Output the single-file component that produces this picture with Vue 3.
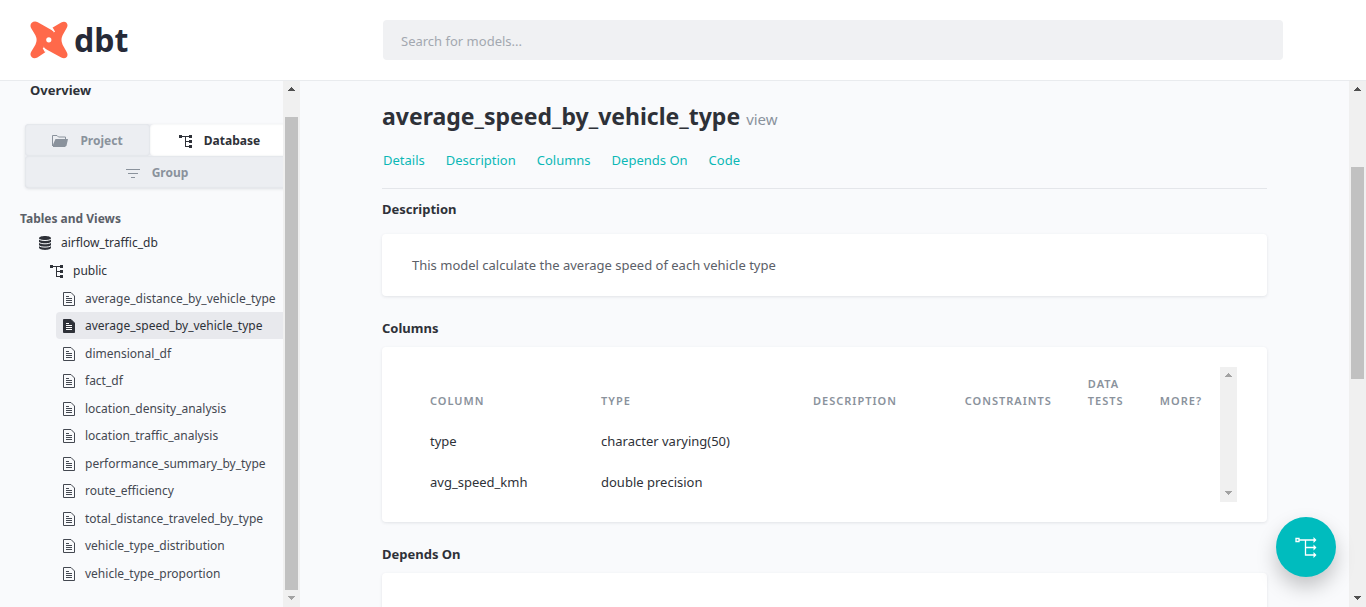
<script setup>
import { ref, h } from 'vue'

const query = ref('')

const links = ['Details', 'Description', 'Columns', 'Depends On', 'Code']

const models = [
  'average_distance_by_vehicle_type',
  'average_speed_by_vehicle_type',
  'dimensional_df',
  'fact_df',
  'location_density_analysis',
  'location_traffic_analysis',
  'performance_summary_by_type',
  'route_efficiency',
  'total_distance_traveled_by_type',
  'vehicle_type_distribution',
  'vehicle_type_proportion',
]
const active = ref('average_speed_by_vehicle_type')

const headings = ['Column', 'Type', 'Description', 'Constraints', 'Data Tests', 'More?']
const columns = [
  { name: 'type', type: 'character varying(50)' },
  { name: 'avg_speed_kmh', type: 'double precision' },
]

const TreeIcon = () =>
  h('svg', { width: 13, height: 13, viewBox: '0 0 13 13', fill: 'currentColor', 'shape-rendering': 'crispEdges', 'aria-hidden': 'true' }, [
    h('path', { d: 'M0 0h3v1h7V0h3v3h-3V2H7v4h3V5h3v3h-3V7H7v4h3v-1h3v3h-3v-1H6V2H3v1H0z' }),
  ])

const ArrowUp = () =>
  h('svg', { width: 7, height: 4, viewBox: '0 0 7 4', fill: 'currentColor', 'shape-rendering': 'crispEdges', 'aria-hidden': 'true' }, [
    h('path', { d: 'M3 0h1v1h1v1h1v1h1v1H0V3h1V2h1V1h1z' }),
  ])

const ArrowDown = () =>
  h('svg', { width: 7, height: 4, viewBox: '0 0 7 4', fill: 'currentColor', 'shape-rendering': 'crispEdges', 'aria-hidden': 'true' }, [
    h('path', { d: 'M0 0h7v1H6v1H5v1H4v1H3V3H2V2H1V1H0z' }),
  ])
</script>

<template>
  <div class="app">
    <header class="topbar">
      <a class="logo" href="#" aria-label="dbt">
        <svg width="38" height="38" viewBox="0 0 38 38" aria-hidden="true">
          <path
            fill="#ff694a"
            d="M7.8 1.200 21.500 8.900Q24 10.400 24 12.200 24 8.800 21.900 7L31.200 1.500C35.600-1.100 39.500 3 36.400 7.400L32.600 14.200Q30.400 19 32.600 23.800L36.400 30.600C39.500 35 35.600 39.100 31.200 36.500L17 28.800Q14.200 27.400 13.600 25.400 13.200 29.200 16 30.800L7.400 36.500C3 39.100-1.300 35 1.200 30.800L5.400 23.800Q7.800 19 5.400 14.200L1.200 7.200C-1.300 3 3-1.100 7.800 1.200Z"
          />
          <path d="M22 6.500 24.500 11M13.200 27 15.800 31.500" stroke="#fff" stroke-width="1.200" />
          <circle cx="18.800" cy="18.800" r="2.600" fill="#fff" />
        </svg>
        <span>dbt</span>
      </a>
      <div class="search">
        <input v-model="query" type="search" aria-label="Search for models" placeholder="Search for models..." />
      </div>
    </header>

    <div class="body">
      <aside class="sidebar">
        <div class="side-content">
          <a class="overview" href="#">Overview</a>

          <div class="switcher">
            <button type="button">
              <svg width="16" height="12" viewBox="0 0 16 12" aria-hidden="true">
                <path d="M.5 11V.5h4.500l1.500 1.500h7V4.500" fill="none" stroke="currentColor" />
                <path d="M3.500 4H16l-1.500 6.500L13 12H1V9.500z" fill="currentColor" />
              </svg>
              Project
            </button>
            <button type="button" class="selected"><TreeIcon />Database</button>
            <button type="button" class="wide">
              <svg width="14" height="9" viewBox="0 0 14 9" stroke="currentColor" aria-hidden="true">
                <path d="M0 .5h14M2 4.500h10M5 8.500h4" />
              </svg>
              Group
            </button>
          </div>

          <h2 class="side-title">Tables and Views</h2>
          <nav class="tree">
            <a class="node database" href="#">
              <svg width="12" height="14" viewBox="0 0 12 14" aria-hidden="true">
                <path d="M0 2.500C0-.7 12-.7 12 2.500v9c0 3.200-12 3.200-12 0z" fill="currentColor" />
                <path d="M0 3c1.500 2 10.500 2 12 0M0 6.300c1.500 2 10.500 2 12 0M0 9.600c1.500 2 10.500 2 12 0" fill="none" stroke="#f9fafc" />
              </svg>
              airflow_traffic_db
            </a>
            <a class="node schema" href="#"><TreeIcon />public</a>
            <ul>
              <li v-for="m in models" :key="m">
                <a class="node model" :class="{ active: m === active }" href="#" @click.prevent="active = m">
                  <svg width="12" height="14" viewBox="0 0 12 14" aria-hidden="true">
                    <path
                      d="M.5.5h7.500l3.500 3.500v9.500H.5z"
                      :fill="m === active ? 'currentColor' : 'none'"
                      stroke="currentColor"
                      stroke-linejoin="round"
                    />
                    <path d="M3 4.500h3M3 6.500h6M3 8.500h6M3 10.500h6" :stroke="m === active ? '#fff' : 'currentColor'" />
                  </svg>
                  {{ m }}
                </a>
              </li>
            </ul>
          </nav>
        </div>
        <div class="scrollbar">
          <ArrowUp />
          <div class="track side-track"><div class="thumb"></div></div>
          <ArrowDown class="dim" />
        </div>
      </aside>

      <main class="main">
        <div class="page">
          <h1>average_speed_by_vehicle_type <small>view</small></h1>
          <nav class="links">
            <a v-for="l in links" :key="l" href="#">{{ l }}</a>
          </nav>

          <section>
            <h2>Description</h2>
            <div class="panel">
              <p>This model calculate the average speed of each vehicle type</p>
            </div>
          </section>

          <section>
            <h2>Columns</h2>
            <div class="panel columns-panel">
              <table>
                <colgroup>
                  <col class="c-name" />
                  <col class="c-type" />
                  <col />
                  <col class="c-cons" />
                  <col class="c-test" />
                  <col class="c-more" />
                </colgroup>
                <thead>
                  <tr>
                    <th v-for="t in headings" :key="t" scope="col">{{ t }}</th>
                  </tr>
                </thead>
                <tbody>
                  <tr v-for="c in columns" :key="c.name">
                    <td>{{ c.name }}</td>
                    <td>{{ c.type }}</td>
                    <td></td>
                    <td></td>
                    <td></td>
                    <td></td>
                  </tr>
                </tbody>
              </table>
              <div class="scrollbar idle">
                <ArrowUp />
                <ArrowDown />
              </div>
            </div>
          </section>

          <section>
            <h2>Depends On</h2>
            <div class="panel depends"></div>
          </section>
        </div>
        <div class="scrollbar">
          <ArrowUp />
          <div class="track main-track"><div class="thumb"></div></div>
          <ArrowDown />
        </div>
      </main>
    </div>

    <button class="fab" type="button" aria-label="View lineage graph">
      <svg width="22" height="21" viewBox="0 0 22 21" fill="none" stroke="#fff" aria-hidden="true">
        <path d="M1 1.500h3v3H1zM4.500 3H19M10.500 3v15H19M10.500 10.500H19" stroke-width="1.300" />
        <path d="M18.500 0v6l3-3zM18.500 7.500v6l3-3zM18.500 15v6l3-3z" fill="#fff" stroke="none" />
      </svg>
    </button>
  </div>
</template>

<style>
body {
  overflow: hidden;
}
</style>

<style scoped>
* {
  box-sizing: border-box;
}
.app {
  display: flex;
  flex-direction: column;
  height: 100vh;
  background: #f9fafc;
  color: #2e3138;
  font: 13px/20px "Noto Sans", "Open Sans", sans-serif;
}
a {
  color: inherit;
  text-decoration: none;
}
button {
  font: inherit;
  border: 0;
  padding: 0;
  cursor: pointer;
}
h1,
h2,
p,
ul {
  margin: 0;
  padding: 0;
}
ul {
  list-style: none;
}
svg {
  flex: none;
}

.topbar {
  display: flex;
  flex: none;
  align-items: center;
  height: 81px;
  background: #fff;
  border-bottom: 1px solid #e9ebee;
}
.logo {
  display: flex;
  flex: none;
  align-items: center;
  gap: 6px;
  width: 300px;
  padding-left: 30px;
  color: #262a38;
  font-size: 32px;
  font-weight: 700;
  line-height: 40px;
}
.search {
  flex: 1;
  padding: 0 83px;
}
.search input {
  display: block;
  width: 100%;
  height: 40px;
  padding: 2px 18px 0;
  border: 0;
  border-radius: 4px;
  background: #f0f1f3;
  color: inherit;
  font: inherit;
}
.search input::placeholder {
  color: #a3a8b0;
  opacity: 1;
}

.body {
  display: flex;
  flex: 1;
  min-height: 0;
}
.sidebar {
  display: flex;
  flex: none;
  width: 300px;
  font-size: 12px;
}
.side-content {
  flex: 1;
  min-width: 0;
  overflow: hidden;
}
.overview {
  display: block;
  padding-left: 30px;
  font-size: 13px;
  font-weight: 700;
  line-height: 18px;
}
.switcher {
  display: grid;
  grid-template-columns: 125px 1fr;
  margin: 25px -6px 0 25px;
  border-radius: 4px;
  background: #eceef2;
  box-shadow: 0 1px 3px rgba(60, 66, 80, 0.14);
}
.switcher button {
  display: flex;
  align-items: center;
  justify-content: center;
  gap: 12px;
  height: 32px;
  padding-top: 2px;
  border-radius: 4px;
  background: none;
  box-shadow: inset 0 0 2px rgba(60, 66, 80, 0.12);
  color: #8a929c;
  font-weight: 700;
}
.switcher button.selected {
  background: #fff;
  color: #2e3138;
}
.switcher button.wide {
  grid-column: 1 / -1;
}
.side-title {
  margin: 21px 0 0;
  padding-left: 20px;
  color: #5b6068;
  font-size: 12px;
  line-height: 20px;
}
.node {
  display: flex;
  align-items: center;
  gap: 10px;
  height: 27px;
  padding-top: 1px;
  border-radius: 4px 0 0 4px;
  white-space: nowrap;
}
.database {
  margin-bottom: 1px;
  padding-left: 39px;
}
.schema {
  padding-left: 50px;
}
.model {
  margin-left: 56px;
  padding-left: 7px;
  color: #444851;
}
.tree li:nth-child(odd) {
  padding-top: 1px;
}
.model.active {
  background: #e8e9ed;
  color: #2e3138;
}

.scrollbar {
  display: flex;
  flex: none;
  flex-direction: column;
  align-items: center;
  justify-content: space-between;
  width: 17px;
  padding: 6px 0 7px;
  background: #f0f0f0;
  color: #505050;
}
.scrollbar.idle,
.dim {
  color: #a3a3a3;
}
.track {
  display: flex;
  flex: 1;
  flex-direction: column;
  width: 13px;
  padding: 6px 0;
}
.thumb {
  background: #c1c1c1;
}
.side-track {
  justify-content: flex-end;
}
.side-track .thumb {
  height: 96%;
}
.main-track .thumb {
  height: 43%;
  margin-top: 70px;
}

.main {
  display: flex;
  flex: 1;
  min-width: 0;
}
.page {
  flex: 1;
  min-width: 0;
  padding: 17px 82px 0;
  overflow: hidden;
}
h1 {
  font-size: 23px;
  line-height: 36px;
}
h1 small {
  color: #8a929c;
  font-size: 15px;
  font-weight: 400;
}
.links {
  display: flex;
  gap: 21px;
  margin-bottom: 10px;
  padding: 13px 0 18px 1px;
  border-bottom: 1px solid #e4e6ea;
  color: #0bb8b6;
}
section h2 {
  font-size: 13px;
  line-height: 20px;
}
.panel {
  margin: 15px 0 22px;
  padding: 21px 30px;
  border-radius: 4px;
  background: #fff;
  box-shadow: 0 1px 3px rgba(60, 66, 80, 0.12);
  color: #5b6068;
}
.columns-panel {
  display: flex;
  margin-top: 9px;
  padding: 20px 30px;
}
.depends {
  height: 120px;
  margin-top: 9px;
}
table {
  flex: 1;
  min-width: 0;
  border-collapse: collapse;
  table-layout: fixed;
  color: #2e3138;
}
.c-name { width: 171px; }
.c-type { width: 212px; }
.c-cons { width: 122px; }
.c-test { width: 72px; }
.c-more { width: 78px; }
th {
  padding: 8px 18px 11px;
  color: #8a929c;
  font-size: 11px;
  font-weight: 600;
  line-height: 17px;
  letter-spacing: 1px;
  text-align: left;
  text-transform: uppercase;
  vertical-align: bottom;
}
td {
  height: 41px;
  padding: 0 18px;
}

.fab {
  position: fixed;
  right: 30px;
  bottom: 30px;
  display: flex;
  align-items: center;
  justify-content: center;
  width: 60px;
  height: 60px;
  border-radius: 50%;
  background: #00bcbe;
  box-shadow: 0 10px 20px rgba(0, 0, 0, 0.22);
}
</style>
